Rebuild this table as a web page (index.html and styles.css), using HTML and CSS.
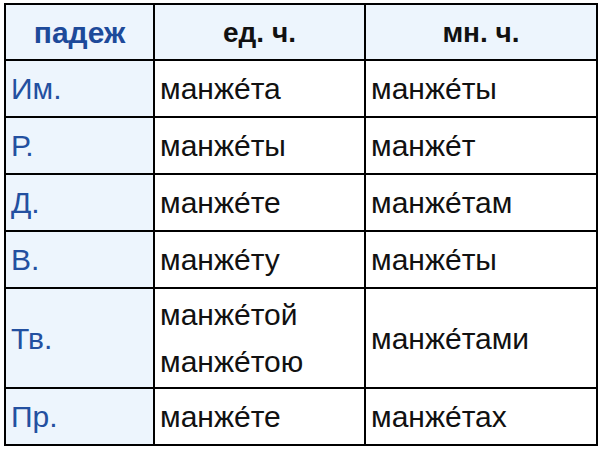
FILE: index.html
```html
<!DOCTYPE html>
<html lang="ru">
<head>
<meta charset="utf-8">
<link rel="stylesheet" href="styles.css">
</head>
<body>
<table class="decl">
  <colgroup>
    <col class="c1"><col class="c2"><col class="c3">
  </colgroup>
  <thead>
    <tr class="head">
      <th class="case-h">падеж</th>
      <th>ед. ч.</th>
      <th>мн. ч.</th>
    </tr>
  </thead>
  <tbody>
    <tr><td class="case">Им.</td><td>манже́та</td><td>манже́ты</td></tr>
    <tr><td class="case">Р.</td><td>манже́ты</td><td>манже́т</td></tr>
    <tr><td class="case">Д.</td><td>манже́те</td><td>манже́там</td></tr>
    <tr><td class="case">В.</td><td>манже́ту</td><td>манже́ты</td></tr>
    <tr class="double"><td class="case">Тв.</td><td>манже́той<br>манже́тою</td><td>манже́тами</td></tr>
    <tr><td class="case">Пр.</td><td>манже́те</td><td>манже́тах</td></tr>
  </tbody>
</table>
</body>
</html>
```

FILE: styles.css
```css
html, body {
  margin: 0;
  padding: 0;
  background: #ffffff;
}

body {
  padding: 3px 0 0 4px;
  font-family: "Liberation Sans", Arial, sans-serif;
}

.decl {
  border-collapse: collapse;
  table-layout: fixed;
  width: 592px;
  border: 2px solid #000;
}

.c1 { width: 149px; }
.c2 { width: 211px; }
.c3 { width: 232px; }

.decl th,
.decl td {
  border: 2px solid #000;
  padding: 0 5px;
  font-size: 30px;
  line-height: 47px;
  color: #111;
  text-align: left;
  vertical-align: middle;
}

.decl tr { height: 57px; }
.decl tr.head { height: 56px; }
.decl tr.double { height: 100px; }

.decl th {
  background: #edf5fd;
  text-align: center;
  font-weight: bold;
  font-size: 28px;
}

.decl th.case-h {
  color: #1d4a9a;
  font-size: 30px;
}

.decl td.case {
  background: #edf5fd;
  color: #2350a0;
}
```
